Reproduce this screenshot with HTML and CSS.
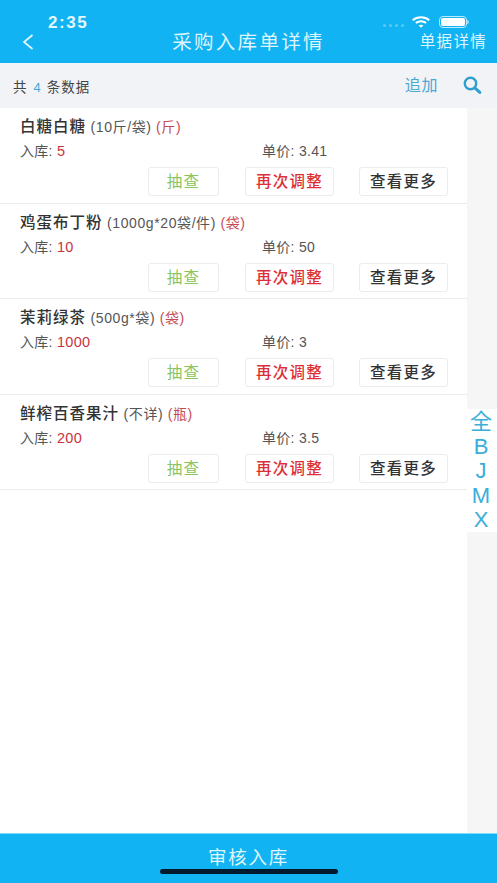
FILE: index.html
```html
<!DOCTYPE html>
<html lang="zh">
<head>
<meta charset="utf-8">
<title>采购入库单详情</title>
<link rel="stylesheet" href="styles.css">
</head>
<body>
<div class="app">
  <header class="header">
    <div class="status">
      <span class="time">2:35</span>
      <div class="status-icons">
        <span class="signal"><i></i><i></i><i></i><i></i></span>
        <svg class="wifi" width="20" height="12" viewBox="0 0 20 13"><path d="M1 4.600C6 .2 14 .2 19 4.600" fill="none" stroke="#fff" stroke-width="2.200"/><path d="M4.400 7.600c3.200-2.700 8-2.700 11.200 0" fill="none" stroke="#fff" stroke-width="2.200"/><path d="M7.500 10.300c1.500-1.100 3.500-1.100 5 0L10 12.800z" fill="#fff"/></svg>
        <span class="battery"><b></b></span>
      </div>
    </div>
    <div class="nav">
      <svg class="back" width="12" height="18" viewBox="0 0 12 18"><path d="M10.500 2 2 9l8.500 7" fill="none" stroke="#e6f7fe" stroke-width="1.700"/></svg>
      <h1 class="title">采购入库单详情</h1>
      <span class="detail">单据详情</span>
    </div>
  </header>
  <div class="toolbar">
    <span class="count">共<em>4</em>条数据</span>
    <span class="add">追加</span>
    <svg class="search" width="20" height="20" viewBox="0 0 20 20"><circle cx="8.500" cy="8.500" r="5.700" fill="none" stroke="#2f9fd0" stroke-width="2.400"/><path d="m12.800 12.800 5 4.600" stroke="#2f9fd0" stroke-width="3" stroke-linecap="round"/></svg>
  </div>
  <div class="content">
    <main class="list">
      <section class="item">
        <div class="name"><strong>白糖白糖</strong> <span>(10斤/袋)</span> <span class="unit">(斤)</span></div>
        <div class="meta"><span class="in">入库: <b>5</b></span><span class="price">单价: 3.41</span></div>
        <div class="actions"><button class="btn green">抽查</button><button class="btn red">再次调整</button><button class="btn dark">查看更多</button></div>
      </section>
      <section class="item">
        <div class="name"><strong>鸡蛋布丁粉</strong> <span>(1000g*20袋/件)</span> <span class="unit">(袋)</span></div>
        <div class="meta"><span class="in">入库: <b>10</b></span><span class="price">单价: 50</span></div>
        <div class="actions"><button class="btn green">抽查</button><button class="btn red">再次调整</button><button class="btn dark">查看更多</button></div>
      </section>
      <section class="item">
        <div class="name"><strong>茉莉绿茶</strong> <span>(500g*袋)</span> <span class="unit">(袋)</span></div>
        <div class="meta"><span class="in">入库: <b>1000</b></span><span class="price">单价: 3</span></div>
        <div class="actions"><button class="btn green">抽查</button><button class="btn red">再次调整</button><button class="btn dark">查看更多</button></div>
      </section>
      <section class="item">
        <div class="name"><strong>鲜榨百香果汁</strong> <span>(不详)</span> <span class="unit">(瓶)</span></div>
        <div class="meta"><span class="in">入库: <b>200</b></span><span class="price">单价: 3.5</span></div>
        <div class="actions"><button class="btn green">抽查</button><button class="btn red">再次调整</button><button class="btn dark">查看更多</button></div>
      </section>
    </main>
    <aside class="rail">
      <div class="index"><span>全</span><span>B</span><span>J</span><span>M</span><span>X</span></div>
    </aside>
  </div>
  <footer class="footer">
    <span class="submit">审核入库</span>
    <span class="home"></span>
  </footer>
</div>
</body>
</html>
```
FILE: styles.css
```css
* { box-sizing: border-box; }
html, body { margin: 0; padding: 0; }
body {
  width: 497px;
  height: 883px;
  overflow: hidden;
  background: #fff;
  font-family: "Liberation Sans", "Noto Sans CJK SC", sans-serif;
}
.app { display: flex; flex-direction: column; height: 883px; }

.header { height: 63px; background: #12b3f2; flex: none; color: #fff; }
.status { height: 27px; display: flex; justify-content: space-between; align-items: flex-end; padding: 0 27px 0 48px; }
.time { font-size: 17px; line-height: 18px; font-weight: 700; letter-spacing: 1.600px; color: #e4f7fe; margin-bottom: -5px; }
.status-icons { display: flex; align-items: center; gap: 8px; margin-bottom: -1px; }
.signal { display: flex; gap: 3px; margin-top: 7px; margin-right: -1px; }
.signal i { width: 3px; height: 3px; border-radius: 50%; background: #5cc9f2; }
.battery { position: relative; width: 28px; height: 12px; border: 1px solid #bfeafb; border-radius: 4px; padding: 1px; display: block; margin-right: 3px; }
.battery b { display: block; height: 100%; background: #fff; border-radius: 2px; }
.battery::after { content: ""; position: absolute; right: -3px; top: 3px; width: 2px; height: 4px; background: #8fdcf8; border-radius: 0 2px 2px 0; }

.nav { height: 36px; position: relative; display: flex; align-items: center; justify-content: center; margin-top: -1px; }
.back { position: absolute; left: 22px; top: 7px; }
.title { margin: 0; font-size: 19.500px; font-weight: 400; letter-spacing: 2.300px; color: #dff5fe; padding-bottom: 8px; }
.detail { position: absolute; right: 10px; top: 6px; font-size: 15.500px; line-height: 20px; letter-spacing: 1.300px; color: #dff5fe; }

.toolbar { height: 45px; flex: none; background: #f1f3f6; display: flex; align-items: center; padding: 0 15px 0 13px; }
.count { font-size: 13.500px; color: #444; flex: 1; letter-spacing: 1px; }
.count em { font-style: normal; color: #47a9d4; margin: 0 5px 0 6px; font-size: 13px; }
.add { font-size: 16px; color: #4ba9d3; margin-right: 24px; letter-spacing: .6px; margin-top: -3px; }
.search { display: block; margin-top: -2px; }

.content { flex: 1; display: flex; min-height: 0; }
.list { width: 467px; flex: none; }
.rail { flex: 1; background: #f6f6f6; position: relative; }
.index { position: absolute; left: 0; right: 0; top: 301px; height: 123px; background: #fff; display: flex; flex-direction: column; align-items: center; padding: 1px 2px 0 0; color: #3aaedb; font-size: 22px; line-height: 24.500px; }

.item { height: 95.500px; border-bottom: 1px solid #ececec; padding: 9px 19px 0 20px; }
.name { font-size: 14px; line-height: 19px; letter-spacing: .6px; color: #555; white-space: nowrap; }
.name strong { font-size: 15.500px; font-weight: 500; color: #333; letter-spacing: 1px; }
.name .unit { color: #c44b55; }
.meta { display: flex; font-size: 14px; line-height: 16px; letter-spacing: .3px; color: #555; margin-top: 6px; }
.in { width: 242px; }
.in b { font-weight: 500; color: #c9343c; font-size: 14.500px; }
.actions { display: flex; justify-content: flex-end; gap: 25px; margin-top: 8px; }
.btn { height: 29px; padding: 0 0 3px; background: #fff; border: 1px solid #ececec; border-radius: 3px; font-family: inherit; font-size: 15.500px; font-weight: 500; letter-spacing: 1.200px; width: 89px; }
.green { width: 71px; color: #8ac45f; margin-right: 1px; font-weight: 400; }
.red { color: #dc2f37; }
.dark { color: #333; }

.footer { height: 50px; flex: none; background: #12b3f2; border-top: 1px solid #7ddcfb; position: relative; text-align: center; }
.submit { display: block; font-size: 18.500px; line-height: 20px; margin-top: 14px; color: #dff5fe; letter-spacing: 1.700px; }
.home { position: absolute; left: 160px; top: 35px; width: 178px; height: 5px; background: #021a2e; border-radius: 3px; }
```
